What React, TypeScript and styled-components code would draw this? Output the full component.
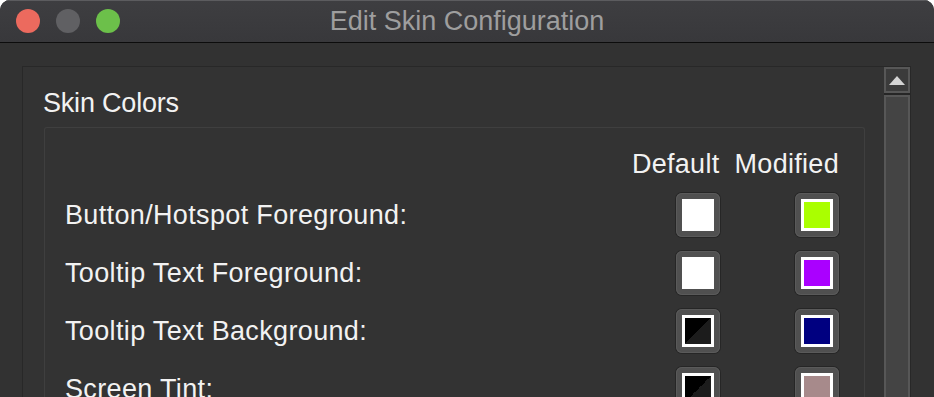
import { Fragment } from 'react';
import styled, { createGlobalStyle } from 'styled-components';

const FONT = `'Liberation Sans', Arial, sans-serif`;

const GlobalStyle = createGlobalStyle`
  html, body {
    margin: 0;
    padding: 0;
    background: #ffffff;
  }
`;

const Window = styled.div`
  width: 934px;
  height: 397px;
  overflow: hidden;
  border-radius: 10px 10px 0 0;
  background: #323232;
  display: flex;
  flex-direction: column;
  font-family: ${FONT};
`;

const TitleBar = styled.header`
  flex: none;
  height: 42px;
  display: grid;
  grid-template-columns: 1fr auto 1fr;
  align-items: center;
  padding: 0 16px;
  background: linear-gradient(#3e3e41, #38383b);
  box-shadow: inset 0 1px #5c5c5f;
  border-bottom: 1px solid #0c0c0c;
`;

const Lights = styled.div`
  display: flex;
  gap: 16px;
`;

const Light = styled.span<{ $color: string }>`
  width: 24px;
  height: 24px;
  border-radius: 50%;
  background: ${({ $color }) => $color};
`;

const Title = styled.h1`
  margin: 0;
  font-size: 27px;
  font-weight: normal;
  line-height: 30px;
  color: #9e9e9e;
`;

const Body = styled.main`
  flex: 1;
  display: flex;
  padding: 23px 23px 0 22px;
  min-height: 0;
`;

const ScrollPanel = styled.section`
  flex: 1;
  display: flex;
  border: 1px solid #282828;
  border-bottom: none;
  background: #333333;
`;

const GroupArea = styled.div`
  flex: 1;
  padding: 21px 19px 0 21px;
`;

const GroupTitle = styled.h2`
  margin: 0 0 9px -1px;
  font-size: 27px;
  font-weight: normal;
  line-height: 30px;
  letter-spacing: -0.2px;
  color: #f2f2f2;
`;

const GroupBox = styled.div`
  border: 1px solid #3f3f3f;
  border-bottom: none;
  border-radius: 3px 3px 0 0;
  padding: 21px 25px 40px 20px;
  display: grid;
  grid-template-columns: 1fr auto auto;
  column-gap: 15px;
  row-gap: 14px;
  align-items: center;
  justify-items: end;
`;

const HeaderCell = styled.div`
  font-size: 27px;
  line-height: 30px;
  letter-spacing: 0.3px;
  color: #f2f2f2;
`;

const Label = styled.div`
  justify-self: start;
  font-size: 27px;
  line-height: 30px;
  letter-spacing: 0.35px;
  color: #f2f2f2;
`;

const SwatchFrame = styled.div`
  width: 44px;
  height: 44px;
  box-sizing: border-box;
  padding: 6px;
  border-radius: 6px;
  background: #505050;
  box-shadow: 0 0 0 1px #262626, inset 0 0 0 1px #5a5a5a;
`;

const Chip = styled.div<{ $fill: string; $bordered: boolean }>`
  width: 32px;
  height: 32px;
  box-sizing: border-box;
  border: ${({ $bordered }) => ($bordered ? '3px solid #ffffff' : 'none')};
  background: ${({ $fill }) => $fill};
`;

const Scrollbar = styled.div`
  width: 26px;
  display: flex;
  flex-direction: column;
  gap: 2px;
  background: #262626;
`;

const ArrowButton = styled.div`
  height: 26px;
  box-sizing: border-box;
  border: 2px solid #575757;
  background: #3b3b3b;
  display: flex;
  align-items: center;
  justify-content: center;
`;

const Track = styled.div`
  flex: 1;
  box-sizing: border-box;
  border: 2px solid #575757;
  border-bottom: none;
  background: #444444;
`;

const EMPTY = 'linear-gradient(to top left, #1c1c1c 50%, #000000 50%)';

type Row = {
  label: string;
  def: string;
  mod: string;
};

const rows: Row[] = [
  { label: 'Button/Hotspot Foreground:', def: '#ffffff', mod: '#aaff00' },
  { label: 'Tooltip Text Foreground:', def: '#ffffff', mod: '#aa00ff' },
  { label: 'Tooltip Text Background:', def: EMPTY, mod: '#000080' },
  { label: 'Screen Tint:', def: EMPTY, mod: '#a78a8b' },
];

const Swatch = ({ fill }: { fill: string }) => (
  <SwatchFrame>
    <Chip $fill={fill} $bordered={fill !== '#ffffff'} />
  </SwatchFrame>
);

export default function App() {
  return (
    <>
      <GlobalStyle />
      <Window>
        <TitleBar>
          <Lights>
            <Light $color="#ec6a5e" />
            <Light $color="#606063" />
            <Light $color="#6cc04a" />
          </Lights>
          <Title>Edit Skin Configuration</Title>
          <span />
        </TitleBar>

        <Body>
          <ScrollPanel>
            <GroupArea>
              <GroupTitle>Skin Colors</GroupTitle>
              <GroupBox>
                <span />
                <HeaderCell>Default</HeaderCell>
                <HeaderCell>Modified</HeaderCell>
                {rows.map((row) => (
                  <Fragment key={row.label}>
                    <Label>{row.label}</Label>
                    <Swatch fill={row.def} />
                    <Swatch fill={row.mod} />
                  </Fragment>
                ))}
              </GroupBox>
            </GroupArea>

            <Scrollbar>
              <ArrowButton>
                <svg width="16" height="9" viewBox="0 0 16 9">
                  <path d="M8 0 L16 9 L0 9 Z" fill="#d4d4d4" />
                </svg>
              </ArrowButton>
              <Track />
            </Scrollbar>
          </ScrollPanel>
        </Body>
      </Window>
    </>
  );
}
